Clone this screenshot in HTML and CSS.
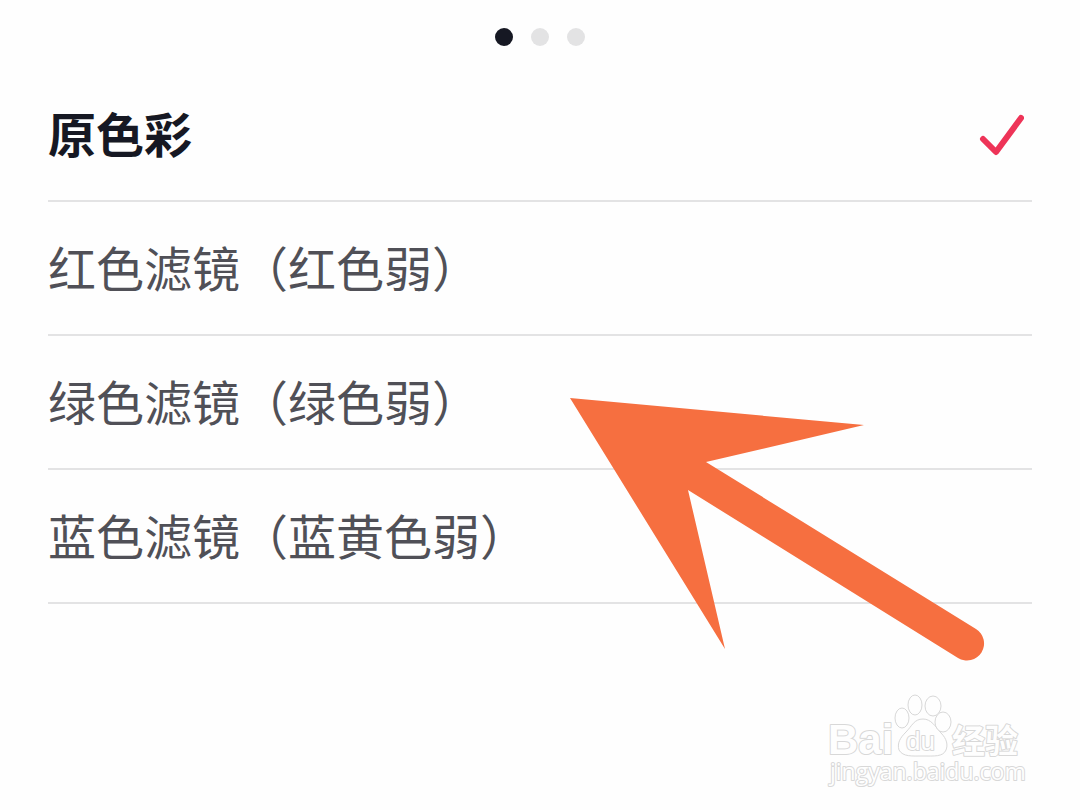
FILE: index.html
```html
<!DOCTYPE html>
<html lang="zh-CN">
<head>
	<meta charset="UTF-8">
	<meta name="viewport" content="width=device-width, initial-scale=1.0">
	<title>色彩滤镜</title>
	<link rel="stylesheet" href="styles.css">
</head>
<body>
	<main class="page">
		<div class="dots">
			<span class="dot active"></span>
			<span class="dot"></span>
			<span class="dot"></span>
		</div>
		<form class="filters">
			<label class="filter">
				<input type="radio" name="filter" value="none" checked>
				<span class="name">原色彩</span>
				<svg class="check" viewBox="0 0 48 48" aria-hidden="true">
					<path d="M7 29 L20 42 L45 8" />
				</svg>
			</label>
			<label class="filter">
				<input type="radio" name="filter" value="red">
				<span class="name">红色滤镜（红色弱）</span>
				<svg class="check" viewBox="0 0 48 48" aria-hidden="true">
					<path d="M7 29 L20 42 L45 8" />
				</svg>
			</label>
			<label class="filter">
				<input type="radio" name="filter" value="green">
				<span class="name">绿色滤镜（绿色弱）</span>
				<svg class="check" viewBox="0 0 48 48" aria-hidden="true">
					<path d="M7 29 L20 42 L45 8" />
				</svg>
			</label>
			<label class="filter">
				<input type="radio" name="filter" value="blue">
				<span class="name">蓝色滤镜（蓝黄色弱）</span>
				<svg class="check" viewBox="0 0 48 48" aria-hidden="true">
					<path d="M7 29 L20 42 L45 8" />
				</svg>
			</label>
		</form>
		<svg class="arrow" viewBox="570 397 416 264" aria-hidden="true">
			<path d="M570 398 L864 425 L706 462 L976 629 A17 17 0 0 1 958 658 L688 490 L725 649 Z" />
		</svg>
		<footer class="watermark">
			<svg viewBox="0 0 200 100" role="img" aria-label="Baidu 经验">
				<text class="latin" x="0" y="64" font-size="42">Bai</text>
				<g class="paw">
					<path d="M95 29 C103 29 107 36 113 43 C119 49 120 55 118 60 C115 67 106 66 95 66 C84 66 75 67 71 60 C69 53 72 48 78 42 C84 36 86 29 95 29 Z" />
					<ellipse cx="74" cy="28" rx="7" ry="10" />
					<ellipse cx="87" cy="15" rx="7" ry="10" />
					<ellipse cx="105" cy="16" rx="8" ry="10" />
					<ellipse cx="115" cy="32" rx="8" ry="10" />
				</g>
				<text class="latin du" x="78" y="60" font-size="26">du</text>
				<text class="cjk" x="124" y="63" font-size="33">经验</text>
				<text class="url" x="2" y="90" font-size="23">jingyan.baidu.com</text>
			</svg>
		</footer>
	</main>
</body>
</html>
```

FILE: styles.css
```css
* {
	box-sizing: border-box;
}
body {
	margin: 0;
	background: #fefefe;
	font-family: 'Noto Sans CJK SC', 'Noto Sans', sans-serif;
}
.page {
	position: relative;
	display: flex;
	flex-direction: column;
	min-height: 100vh;
	padding: 28px 48px 20px;
}
.dots {
	display: flex;
	justify-content: center;
	gap: 18px;
}
.dot {
	width: 18px;
	height: 18px;
	border-radius: 50%;
	background: #e3e3e4;
}
.dot.active {
	background: #161823;
}
.filters {
	margin-top: 22px;
}
.filter {
	display: flex;
	align-items: center;
	justify-content: space-between;
	height: 134px;
	border-bottom: 2px solid #e3e3e4;
	font-size: 48px;
	line-height: 64px;
	color: #505057;
	cursor: pointer;
}
.filter input {
	position: absolute;
	opacity: 0;
}
.name {
	padding-bottom: 5px;
}
.filter input:checked + .name {
	font-weight: 700;
	color: #161823;
}
.check {
	width: 48px;
	height: 48px;
	margin-right: 8px;
	fill: none;
	stroke: #ee3458;
	stroke-width: 6px;
	stroke-linecap: round;
	stroke-linejoin: round;
	visibility: hidden;
}
.filter input:checked ~ .check {
	visibility: visible;
}
/* pointer laid over the list */
.arrow {
	position: absolute;
	top: 397px;
	right: 94px;
	width: 416px;
	height: 264px;
	fill: #f66f40;
	pointer-events: none;
}
.watermark {
	display: flex;
	justify-content: flex-end;
	margin-top: auto;
	margin-right: 4px;
}
.watermark svg {
	width: 200px;
	height: 100px;
	overflow: visible;
	fill: #fefefe;
	stroke: #d8d8d8;
	stroke-width: 1px;
}
.watermark text {
	stroke-width: 2px;
	paint-order: stroke;
	stroke-linejoin: round;
}
.latin {
	font-family: 'Liberation Sans', sans-serif;
	font-weight: 700;
}
.watermark .du {
	font-weight: 400;
}
.cjk {
	font-weight: 700;
}
.url {
	font-family: 'Open Sans', sans-serif;
}
```
